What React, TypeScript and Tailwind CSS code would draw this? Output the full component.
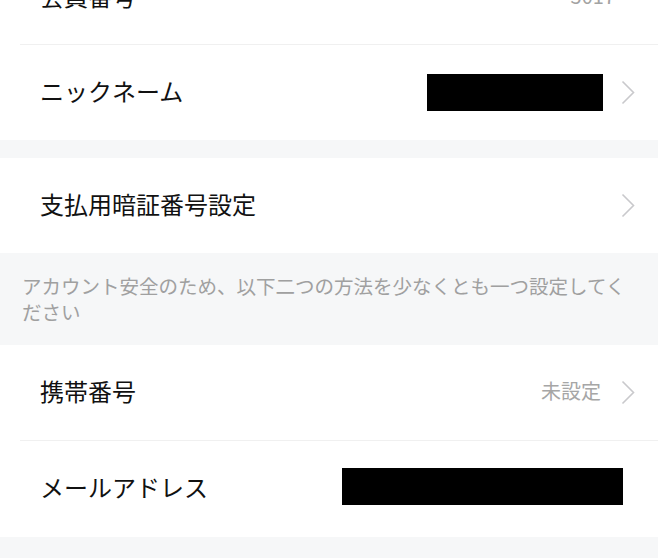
import type { ReactNode } from "react";

const font = { fontFamily: '"Noto Sans CJK JP", "Noto Sans", sans-serif' };

function Chevron() {
  return (
    <svg width="14" height="25" viewBox="0 0 14 25" className="shrink-0">
      <polyline points="1.5,1.5 12.5,12.5 1.5,23.5" fill="none" stroke="#c9c9cc" strokeWidth="1.6" />
    </svg>
  );
}

function Row({
  label,
  children,
  arrow,
  pr,
  h = "h-[95px]",
}: {
  label: string;
  children?: ReactNode;
  arrow?: boolean;
  pr: string;
  h?: string;
}) {
  return (
    <div className={`flex ${h} items-center justify-between bg-white pl-[40px] ${pr}`}>
      <span className="pb-[4px] text-[24px] leading-none text-[#111111]">{label}</span>
      <div className="flex items-center">
        {children}
        {arrow && <Chevron />}
      </div>
    </div>
  );
}

function Divider() {
  return (
    <div className="bg-white pl-[20px]">
      <div className="h-px bg-[#f0f0f0]" />
    </div>
  );
}

export default function App() {
  return (
    <div className="h-[558px] w-[658px] overflow-hidden bg-[#f6f7f8]" style={font}>
      <div className="-mt-[49px]">
        <Row label="会員番号" pr="pr-[43px]" h="h-[93px]">
          <span className="pb-[4px] text-[20px] leading-none text-[#a3a3a3]">5017</span>
        </Row>
        <Divider />
        <Row label="ニックネーム" arrow pr="pr-[23px]">
          <div className="mr-[18px] h-[37px] w-[176px] bg-black" />
        </Row>

        <div className="h-[18px]" />

        <Row label="支払用暗証番号設定" arrow pr="pr-[23px]" />

        <div className="h-[92px] pl-[22px] pr-[14px] pt-[20px]">
          <p className="text-[19.5px] leading-[26px] text-[#a0a0a0]">
            アカウント安全のため、以下二つの方法を少なくとも一つ設定してください
          </p>
        </div>

        <Row label="携帯番号" arrow pr="pr-[23px]">
          <span className="mr-[20px] pb-[4px] text-[20px] leading-none text-[#a6a6a6]">未設定</span>
        </Row>
        <Divider />
        <Row label="メールアドレス" pr="pr-[35px]" h="h-[96px]">
          <div className="mb-[6px] h-[37px] w-[281px] bg-black" />
        </Row>
      </div>
    </div>
  );
}
